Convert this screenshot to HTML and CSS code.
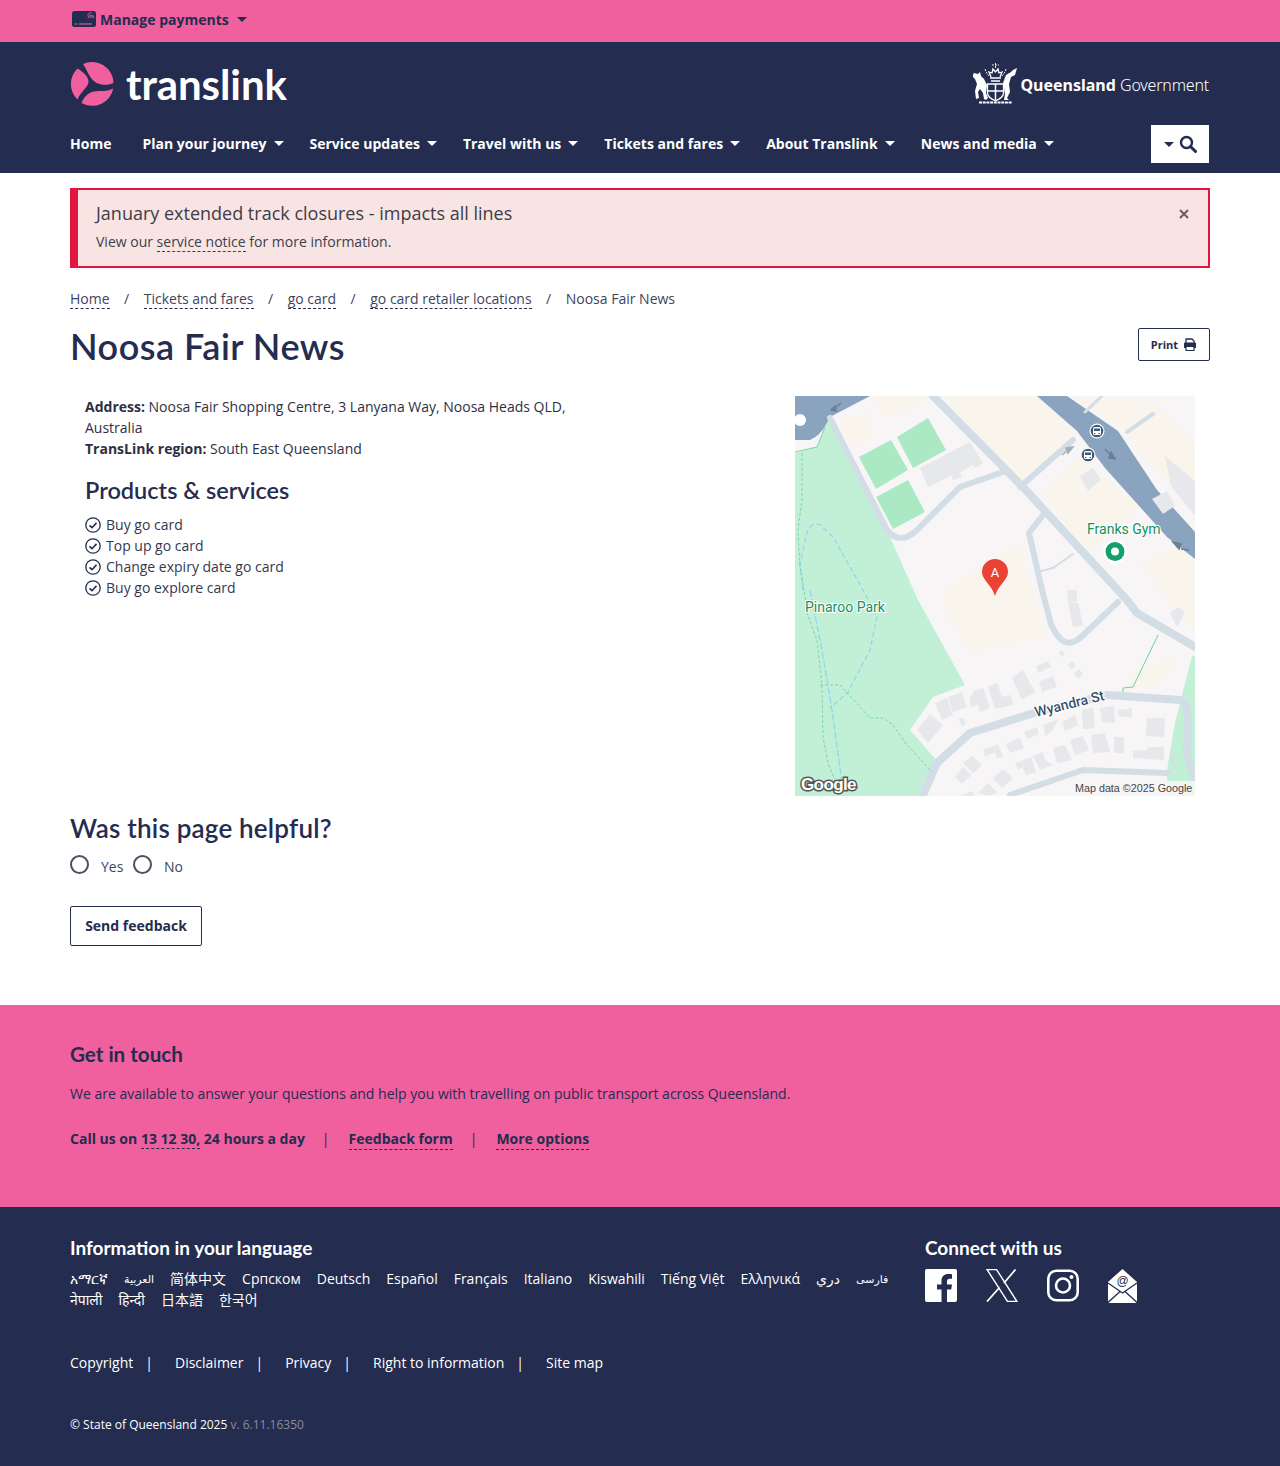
FILE: index.html
```html
<!DOCTYPE html>
<html lang="en">
<head>
<meta charset="utf-8">
<title>Noosa Fair News</title>
<link rel="stylesheet" href="styles.css">
</head>
<body>
<div class="topbar"><div class="wrap topbar-in">
  <svg class="card-ico" width="26" height="18" viewBox="0 0 26 18"><rect x="1" y="1" width="24" height="16" rx="2.500" fill="#242c4f"/><path d="M3.500 14h3M8 14h13" stroke="#f0609f" stroke-width="1"/><path d="M17 8a3 3 0 0 1 6 0M18.500 8a1.500 1.500 0 0 1 3 0M16.500 5.500a4 4 0 0 1 4-3" fill="none" stroke="#f0609f" stroke-width=".8"/></svg>
  <span class="manage">Manage payments</span><span class="caret caret-navy"></span>
</div></div>

<header class="header"><div class="wrap">
  <div class="brand-row">
    <div class="logo">
      <svg width="44" height="44" viewBox="0 0 44 44" fill="#f0609f"><path d="M13 2A21.500 21.500 0 0 1 43.500 21C36 24.500 26 23 21 16 18 12 16 6 13 2Z"/><path d="M7.500 6.500A21.500 21.500 0 0 0 7.500 37.500C11 29 19 25 18.500 19 18 14 13 10 7.500 6.500Z"/><path d="M43.300 26.500A21.500 21.500 0 0 1 11.500 41C14 35 18 30.500 24 29.500 31 28.500 37 30 43.300 26.500Z"/></svg>
      <span class="logo-text">translink</span>
    </div>
    <div class="qg">
      <svg class="crest" width="45" height="42" viewBox="0 0 45 42"><path d="M1 10l4 1 2-2 1 4 3 3 3 6-1 8 2 5-2 2-2-1-1-6-3-4-2 3 1 6-3 1-1-8 2-7-2-5-3-3z" fill="#fff"/><path d="M44 5l-2 7-4 2-2 7 1 8-3 6 2 2-5 0 1-6-1-6-1-5 3-8 5-3 2-2z" fill="#fff"/><g fill="none" stroke="#fff"><path d="M14.500 21h16v9c0 4-4 6-8 8-4-2-8-4-8-8z" stroke-width="1.300"/><path d="M22.500 21v16M14.500 28h16" stroke-width="1.500"/><path d="M18 18h9M17 15h11" stroke-width="1.300"/><path d="M18 14l-2-5 3 1 1-4 2.500 3 2.500-3 1 4 3-1-2 5" stroke-width="1.300"/><path d="M22.500 0v5M19 2h7M12 6c1 3 2 5 4 7M33 6c-1 3-2 5-4 7" stroke-width=".9" stroke-dasharray="2 1"/><path d="M6 39.500h33" stroke-width="1.800" stroke-dasharray="3 .7"/></g></svg>
      <span class="qg-text"><b>Queensland</b> <span class="qg-gov">Government</span></span>
    </div>
  </div>
  <nav class="nav">
    <ul class="nav-list">
      <li class="nav-item nav-home"><a>Home</a></li>
      <li class="nav-item"><a>Plan your journey</a><span class="caret"></span></li>
      <li class="nav-item"><a>Service updates</a><span class="caret"></span></li>
      <li class="nav-item"><a>Travel with us</a><span class="caret"></span></li>
      <li class="nav-item"><a>Tickets and fares</a><span class="caret"></span></li>
      <li class="nav-item"><a>About Translink</a><span class="caret"></span></li>
      <li class="nav-item"><a>News and media</a><span class="caret"></span></li>
    </ul>
    <div class="search-btn"><span class="caret caret-navy"></span><svg width="18" height="18" viewBox="0 0 18 18"><circle cx="7.500" cy="7.500" r="5.500" fill="none" stroke="#242c4f" stroke-width="2.400"/><path d="M11.500 11.500l5 5" stroke="#242c4f" stroke-width="3" stroke-linecap="round"/></svg></div>
  </nav>
</div></header>

<main class="wrap">
  <div class="alert">
    <div>
      <div class="alert-title">January extended track closures - impacts all lines</div>
      <div class="alert-body">View our <a class="dash">service notice</a> for more information.</div>
    </div>
    <svg class="alert-x" width="10" height="10" viewBox="0 0 10 10"><path d="M1 1l8 8M9 1l-8 8" stroke="#6f5a5f" stroke-width="2"/></svg>
  </div>

  <ol class="crumbs">
    <li><a class="dash">Home</a></li><li class="sep">/</li>
    <li><a class="dash">Tickets and fares</a></li><li class="sep">/</li>
    <li><a class="dash">go card</a></li><li class="sep">/</li>
    <li><a class="dash">go card retailer locations</a></li><li class="sep">/</li>
    <li>Noosa Fair News</li>
  </ol>

  <div class="title-row">
    <h1>Noosa Fair News</h1>
    <div class="print">Print <svg width="14" height="13" viewBox="0 0 14 13"><path d="M3 6V1h6l2 2v3" fill="none" stroke="#242c4f" stroke-width="1.300"/><path d="M1 5.500a1 1 0 0 1 1-1h10a1 1 0 0 1 1 1v4.500H1z" fill="#242c4f"/><path d="M3 8.500h8v4H3z" fill="#fff" stroke="#242c4f" stroke-width="1.200"/></svg></div>
  </div>

  <div class="detail">
    <div class="detail-text">
      <p class="addr"><b>Address:</b> Noosa Fair Shopping Centre, 3 Lanyana Way, Noosa Heads QLD, Australia<br><b>TransLink region:</b> South East Queensland</p>
      <h2>Products &amp; services</h2>
      <ul class="checks">
        <li><svg class="tick" width="16" height="16" viewBox="0 0 16 16"><circle cx="8" cy="8" r="7.200" fill="none" stroke="#242c4f" stroke-width="1.300"/><path d="M4.500 8.300l2.500 2.400 4.500-4.800" fill="none" stroke="#242c4f" stroke-width="1.600"/></svg>Buy go card</li>
        <li><svg class="tick" width="16" height="16" viewBox="0 0 16 16"><circle cx="8" cy="8" r="7.200" fill="none" stroke="#242c4f" stroke-width="1.300"/><path d="M4.500 8.300l2.500 2.400 4.500-4.800" fill="none" stroke="#242c4f" stroke-width="1.600"/></svg>Top up go card</li>
        <li><svg class="tick" width="16" height="16" viewBox="0 0 16 16"><circle cx="8" cy="8" r="7.200" fill="none" stroke="#242c4f" stroke-width="1.300"/><path d="M4.500 8.300l2.500 2.400 4.500-4.800" fill="none" stroke="#242c4f" stroke-width="1.600"/></svg>Change expiry date go card</li>
        <li><svg class="tick" width="16" height="16" viewBox="0 0 16 16"><circle cx="8" cy="8" r="7.200" fill="none" stroke="#242c4f" stroke-width="1.300"/><path d="M4.500 8.300l2.500 2.400 4.500-4.800" fill="none" stroke="#242c4f" stroke-width="1.600"/></svg>Buy go explore card</li>
      </ul>
    </div>
    <svg class="map" width="400" height="400" viewBox="0 0 400 400">
      <rect width="400" height="400" fill="#f7f5f6"/>
      <g fill="#f9f5ec">
        <path d="M150 0H242L282 38 222 88 195 60Z"/>
        <path d="M248 97L282 62 345 110 300 150 282 144Z"/>
        <path d="M282 5H360L400 50V120L325 30Z"/>
        <path d="M45 25L75 16 78 42 55 52Z"/>
        <path d="M80 0H135L105 18 88 20Z"/>
        <path d="M148 196L222 147 238 194 250 239 177 257 152 219Z"/>
        <path d="M342 274L381 261 365 290 345 290 330 298Z"/>
        <path d="M345 170L400 140V235L365 195Z"/>
      </g>
      <path d="M0 44H15Q25 40 32 27L35 21 75 0H0Z" fill="#8aa4bf"/>
      <circle cx="5" cy="24" r="6" fill="#fff"/>
      <path d="M242 0H272L323 35 362 94 400 136V163L372 141 310 72 282 35Z" fill="#8aa4bf"/>
      <path d="M0 57L22 51 30 31 35 22 95 141 123 204 170 289 138 301 115 334 143 366 127 400H0Z" fill="#c1f0d6"/>
      <path d="M397 260L380 327 372 374V400H400V260Z" fill="#c1f0d6"/>
      <g fill="#abe9c4">
        <path d="M64 61L96 44 113 74 81 93Z"/>
        <path d="M102 41L133 22 151 54 118 72Z"/>
        <path d="M81 101L113 84 130 116 98 133Z"/>
      </g>
      <g fill="none" stroke="#d3dde6" stroke-linejoin="round" stroke-linecap="round">
        <path d="M138 0L228 91 332 204 342 217 400 251" stroke-width="8"/>
        <path d="M35 22L92 134Q105 150 122 134L165 91 208 76" stroke-width="6"/>
        <path d="M225 91L278 44" stroke-width="6"/>
        <path d="M248 119L234 137 247 194 256 228Q268 256 285 242L323 206" stroke-width="6"/>
        <path d="M128 399L142 367 175 337 242 316 312 299 385 304Q393 308 393 320L392 361 400 384" stroke-width="8"/>
        <path d="M215 399L288 374 372 377" stroke-width="6"/>
        <path d="M332 36L358 18" stroke-width="4"/>
        <path d="M307 0L290 16" stroke-width="3"/>
        <path d="M246 175L258 172 278 158" stroke-width="2"/>
        <path d="M372 377L380 372 376 360 385 358" stroke-width="2"/>
      </g>
      <g fill="#e6e8ec">
        <path d="M125 72L175 46 188 67 180 72 177 69 165 77 167 81 158 84 157 79 133 91Z"/>
        <path d="M285 80L298 72 306 84 293 95Z"/>
        <path d="M357 103L372 95 380 110 368 118Z"/>
        <path d="M273 207L283 207 288 229 278 231ZM272 194L282 194 282 206 273 207ZM375 217L383 211 390 216 382 231Z"/>
        <path d="M370 60L400 85V120L376 90Z"/>
        <path d="M122 334L135 318 148 329 133 347ZM140 307L152 302 158 319 147 324ZM153 301L167 296 172 311 158 316ZM163 322L168 322 171 327 167 331ZM175 302L180 294 188 292 195 312 185 316 183 309 175 311ZM193 291L202 287 207 301 216 299 218 309 200 313ZM217 282L228 274 240 296 227 304ZM241 270L253 265 256 271 243 277ZM244 286L258 280 262 291 247 296ZM263 257L267 254 270 258 267 261ZM272 269L277 265 281 269 277 273ZM279 277L284 273 288 278 283 283Z"/>
        <path d="M188 354L203 348 208 361 202 362 200 356 190 361ZM211 348L225 342 229 352 215 357ZM229 336L242 331 244 338 232 343ZM248 329L263 323 258 334 251 340ZM267 326L280 319 283 329 270 335ZM287 314L298 312 300 332 288 333ZM305 312L319 310 320 327 307 326ZM323 314L337 312 337 322 323 320ZM352 322L370 322 369 341 351 340Z"/>
        <path d="M220 367L236 361 241 376 231 379 228 371 223 374ZM238 360L248 356 250 364 258 369 245 374ZM258 352L270 349 277 364 262 367ZM275 344L288 340 294 354 280 359ZM296 339L310 337 315 356 298 357ZM319 341L329 341 329 357 319 357ZM338 355L352 354 353 351 369 351 369 364 338 362Z"/>
        <path d="M168 367L177 360 187 369 178 377ZM160 381L168 371 176 379 167 388ZM198 382L208 373 218 382 207 392ZM183 397L193 387 202 396 195 400ZM165 400L177 395 180 400Z"/>
      </g>
      <g fill="none">
        <path d="M0 56L22 51 30 31" stroke="#7fd3ac" stroke-width="1"/>
        <path d="M8 194L5 167 12 137Q16 125 25 129L38 141 68 194 82 221 75 254 53 296 35 312" stroke="#8fd5ee" stroke-width="1.200" stroke-dasharray="5 3"/>
        <path d="M15 194L27 254 37 314 48 394" stroke="#8fd5ee" stroke-width="1.200" stroke-dasharray="7 2"/>
        <path d="M7 57L7 104 3 134 5 171 10 200 12 217 22 244 27 289 28 341 33 367 45 397" stroke="#7fd3ac" stroke-width="1" stroke-dasharray="3 2"/>
        <path d="M25 289H45L75 322H88L98 329 112 349 137 376" stroke="#7fd3ac" stroke-width="1" stroke-dasharray="3 2"/>
        <path d="M363 239L338 291 328 292V296" stroke="#6dd0a5" stroke-width="1"/>
      </g>
      <g stroke="#6a7f93" stroke-width="1.500" fill="#6a7f93">
        <path d="M36 14l5 1-1-5zM40 12l6-5"/>
        <path d="M320 63l-6-1 2-6zM316 60l-6-7"/>
        <path d="M378 146l8 2-2 5zM386 153l8 1"/>
      </g>
      <path d="M278 51l-7 1 2 5zM273 54l-6 5" stroke="#a3aeb8" stroke-width="1.500" fill="#a3aeb8"/>
      <g>
        <circle cx="302" cy="35" r="7.500" fill="#fff"/><circle cx="302" cy="35" r="6.300" fill="#3f5a75"/><rect x="298" y="31" width="8" height="8" rx="1.500" fill="#fff"/><rect x="299" y="32.500" width="6" height="2.500" fill="#3f5a75"/><path d="M299 37.500h1.500M303.500 37.500h1.500" stroke="#3f5a75"/>
        <circle cx="293" cy="59" r="7.500" fill="#fff"/><circle cx="293" cy="59" r="6.300" fill="#3f5a75"/><rect x="289" y="55" width="8" height="8" rx="1.500" fill="#fff"/><rect x="290" y="56.500" width="6" height="2.500" fill="#3f5a75"/><path d="M290 61.500h1.500M294.500 61.500h1.500" stroke="#3f5a75"/>
      </g>
      <text class="poi" x="292" y="138">Franks Gym</text>
      <text class="poi" x="10" y="216">Pinaroo Park</text>
      <path d="M320 144a12 12 0 0 1 12 12c0 4-3 8-6 10l-6 4-6-4c-3-2-6-6-6-10a12 12 0 0 1 12-12z" fill="#fff"/>
      <circle cx="320" cy="155.500" r="9.500" fill="#12a06d"/><circle cx="320" cy="155.500" r="4" fill="#fff"/>
      <path d="M200 163a13 13 0 0 1 13 13c0 8-10 13-13 24-3-11-13-16-13-24a13 13 0 0 1 13-13z" fill="#ea4335"/>
      <text class="pin-a" x="200" y="181">A</text>
      <text class="street" transform="translate(241 321) rotate(-14)">Wyandra St</text>
      <text class="google" x="6" y="394">Google</text>
      <rect x="278" y="385" width="122" height="15" fill="#f7f5f6" opacity=".9"/>
      <text class="mapdata" x="280" y="396">Map data ©2025 Google</text>
    </svg>
  </div>

  <section class="helpful">
    <h3>Was this page helpful?</h3>
    <div class="radios">
      <span class="radio"></span><span class="radio-label">Yes</span>
      <span class="radio"></span><span class="radio-label">No</span>
    </div>
    <div class="send">Send feedback</div>
  </section>
</main>

<section class="touch"><div class="wrap">
  <h3 class="touch-h">Get in touch</h3>
  <p class="touch-p">We are available to answer your questions and help you with travelling on public transport across Queensland.</p>
  <div class="touch-links">
    <span>Call us on <a class="dash-navy">13 12 30,</a> 24 hours a day</span><span class="bar">|</span>
    <a class="dash-navy">Feedback form</a><span class="bar">|</span>
    <a class="dash-navy">More options</a>
  </div>
</div></section>

<footer class="footer"><div class="wrap">
  <div class="foot-top">
    <div class="lang-col">
      <h4>Information in your language</h4>
      <div class="langs">
        <a>አማርኛ</a><a class="rtl-small">العربية</a><a>简体中文</a><a>Српском</a><a>Deutsch</a><a>Español</a><a>Français</a><a>Italiano</a><a>Kiswahili</a><a>Tiếng Việt</a><a>Ελληνικά</a><a>دري</a><a class="rtl-small">فارسی</a><a>नेपाली</a><a>हिन्दी</a><a>日本語</a><a>한국어</a>
      </div>
    </div>
    <div class="connect">
      <h4>Connect with us</h4>
      <div class="socials">
        <svg width="32" height="33" viewBox="0 0 32 33"><path d="M2 0h28a2 2 0 0 1 2 2v29a2 2 0 0 1-2 2h-8V20.500h4.200l.8-5H22V12.500c0-1.500.7-2.700 2.700-2.700H27V5.300c-1-.2-2.500-.3-3.800-.3-4 0-6.700 2.400-6.700 6.800v3.700H12v5h4.500V33H2a2 2 0 0 1-2-2V2a2 2 0 0 1 2-2z" fill="#fff"/></svg>
        <svg width="32" height="33" viewBox="0 0 32 33"><path d="M1 .5h9.500l20.500 32h-9.500z" fill="none" stroke="#fff" stroke-width="1.400"/><path d="M29.500.5L18 14M13.500 18.500L1 32.500" stroke="#fff" stroke-width="1.800" fill="none"/></svg>
        <svg width="32" height="33" viewBox="0 0 32 33"><rect x="1.300" y="1.800" width="29.400" height="29.400" rx="8" fill="none" stroke="#fff" stroke-width="2.600"/><circle cx="16" cy="16.500" r="7" fill="none" stroke="#fff" stroke-width="2.600"/><circle cx="24.500" cy="8" r="2" fill="#fff"/></svg>
        <svg width="29" height="34" viewBox="0 0 29 34"><path d="M14.500 0L29 13v20a1 1 0 0 1-1 1H1a1 1 0 0 1-1-1V13z" fill="#fff"/><path d="M0 14l14.500 10L29 14M0 33.500l12-11M29 33.500l-12-11" fill="none" stroke="#242c4f" stroke-width="1.300"/><text class="at" x="14.500" y="16">@</text></svg>
      </div>
    </div>
  </div>
  <ul class="legal">
    <li>Copyright</li><li class="pipe">|</li>
    <li>Disclaimer</li><li class="pipe">|</li>
    <li>Privacy</li><li class="pipe">|</li>
    <li>Right to information</li><li class="pipe">|</li>
    <li>Site map</li>
  </ul>
  <p class="copy">© State of Queensland 2025 <span class="ver">v. 6.11.16350</span></p>
</div></footer>
</body>
</html>
```

FILE: styles.css
```css
* { box-sizing: border-box; }
html, body { margin: 0; padding: 0; }
body { font-family: "Open Sans", "Noto Sans", sans-serif; font-size: 14px; line-height: 21px; color: #242c4f; background: #fff; }
a { color: inherit; }
ul, ol { list-style: none; margin: 0; padding: 0; }
h1, h2, h3, h4, p { margin: 0; }
.wrap { width: 1140px; margin: 0 auto; }

.caret { display: inline-block; width: 0; height: 0; border-left: 5px solid transparent; border-right: 5px solid transparent; border-top: 5px solid #fff; }
.caret-navy { border-top-color: #242c4f; }

.topbar { background: #f0609f; height: 42px; }
.topbar-in { display: flex; align-items: center; height: 38px; padding-left: 1px; }
.manage { font-weight: 700; font-size: 14px; margin: 0 8px 0 3px; }

.header { background: #242c4f; height: 131px; color: #fff; }
.brand-row { display: flex; justify-content: space-between; align-items: center; height: 83px; padding-right: 1px; }
.logo { display: flex; align-items: center; gap: 12px; }
.logo-text { font-family: "Lato", "Noto Sans", sans-serif; font-weight: 700; font-size: 42px; line-height: 44px; letter-spacing: -.1px; }
.qg { display: flex; align-items: center; gap: 2px; }
.crest { display: block; }
.qg-text { font-size: 16px; font-weight: 300; margin-top: 3px; }
.qg-text b { font-weight: 700; font-family: "Noto Sans", sans-serif; }
.qg-gov { font-family: "Noto Sans", sans-serif; letter-spacing: -.2px; }

.nav { display: flex; justify-content: space-between; align-items: center; height: 38px; padding-right: 1px; }
.nav-list { display: flex; gap: 26px; align-items: center; margin-top: -2px; }
.nav-item { font-weight: 700; font-size: 14px; display: flex; align-items: center; gap: 7px; }
.nav-home { margin-right: 5px; }
.search-btn { width: 58px; height: 38px; background: #fff; display: flex; align-items: center; justify-content: center; gap: 5px; }

.alert { margin-top: 15px; height: 80px; border: 2px solid #e3163f; border-left-width: 8px; background: #f9e4e4; padding: 10px 19px 0 18px; display: flex; justify-content: space-between; color: #3b3f4a; }
.alert-title { font-size: 18px; line-height: 26px; color: #3d3d47; }
.alert-body { margin-top: 5px; }
.alert-x { margin-top: 9px; }
.dash { border-bottom: 1px dashed #242c4f; }
.alert .dash { border-bottom-color: #3b3f4a; }

.crumbs { display: flex; margin-top: 20px; height: 21px; color: #3d4460; }
.crumbs .sep { margin: 0 14.500px; }
.title-row { display: flex; justify-content: space-between; align-items: flex-start; margin-top: 19px; }
h1 { font-family: "Lato", "Noto Sans", sans-serif; font-weight: 600; font-size: 36px; line-height: 36px; letter-spacing: .5px; color: #242c4f; }
.print { width: 72px; height: 33px; border: 1px solid #242c4f; border-radius: 2px; font-size: 11px; font-weight: 700; display: flex; align-items: center; justify-content: center; gap: 5px; }

.detail { display: flex; justify-content: space-between; padding: 0 15px; height: 400px; margin-top: 32px; }
.detail-text { width: 500px; }
.addr { color: #2d3045; }
.addr b { font-weight: 700; }
h2 { font-family: "Lato", "Noto Sans", sans-serif; font-weight: 600; font-size: 23.500px; line-height: 28px; margin-top: 17px; }
.checks { margin-top: 10px; color: #34384e; }
.checks li { display: flex; align-items: center; gap: 5px; height: 21px; }
.map { display: block; }
.poi { font-family: "Roboto", sans-serif; font-size: 14px; fill: #14905f; stroke: #fff; stroke-width: 2px; paint-order: stroke; }
.pin-a { font-family: "Roboto", sans-serif; font-size: 13px; fill: #fff; text-anchor: middle; }
.street { font-family: "Roboto", sans-serif; font-size: 14px; font-weight: 500; fill: #3b5069; stroke: #fff; stroke-width: 2.500px; paint-order: stroke; }
.google { font-family: "Liberation Sans", sans-serif; font-size: 17px; font-weight: 700; fill: #fff; stroke: #555; stroke-width: 3px; paint-order: stroke; letter-spacing: -.6px; }
.mapdata { font-family: "Liberation Sans", sans-serif; font-size: 10.750px; fill: #444; }

.helpful { margin-top: 16px; height: 193px; }
h3 { font-family: "Lato", "Noto Sans", sans-serif; font-weight: 600; font-size: 26px; line-height: 32px; letter-spacing: .2px; }
.radios { display: flex; align-items: center; margin-top: 10px; height: 24px; color: #3d4460; }
.radio { width: 19px; height: 19px; border: 2px solid #4c5263; border-radius: 50%; margin-top: -4px; }
.radio-label { margin: 0 9.500px 0 12px; }
.send { width: 132px; height: 40px; border: 1px solid #242c4f; border-radius: 2px; font-weight: 700; display: flex; align-items: center; justify-content: center; margin-top: 28px; padding-bottom: 2px; }

.touch { background: #f0609f; height: 202px; padding-top: 34px; }
.touch-h { font-size: 20.600px; line-height: 30px; font-weight: 700; letter-spacing: 0; }
.touch-p { margin-top: 14px; }
.touch-links { margin-top: 24px; font-weight: 700; display: flex; align-items: baseline; }
.dash-navy { border-bottom: 1px dashed #242c4f; }
.bar { margin: 0 19px 0 17px; font-weight: 400; }

.footer { background: #242c4f; height: 259px; color: #fff; padding-top: 29px; }
.foot-top { display: flex; justify-content: space-between; }
.lang-col { width: 830px; }
.connect { width: 285px; }
h4 { font-family: "Lato", "Noto Sans", sans-serif; font-size: 19px; line-height: 24px; font-weight: 700; }
.langs { display: flex; flex-wrap: wrap; column-gap: 16px; margin-top: 8px; line-height: 21px; font-family: "Open Sans", "Noto Sans", "Noto Sans CJK SC", "DejaVu Sans", sans-serif; }
.rtl-small { font-size: 11px; }
.socials { display: flex; gap: 29px; margin-top: 9px; }
.socials svg { display: block; }
.at { font-family: "Liberation Sans", sans-serif; font-size: 12px; fill: #242c4f; text-anchor: middle; }
.legal { display: flex; margin-top: 42px; }
.legal .pipe { margin: 0 22px 0 12px; }
.copy { margin-top: 41px; font-size: 12px; }
.ver { color: #8a8d9c; }
```
